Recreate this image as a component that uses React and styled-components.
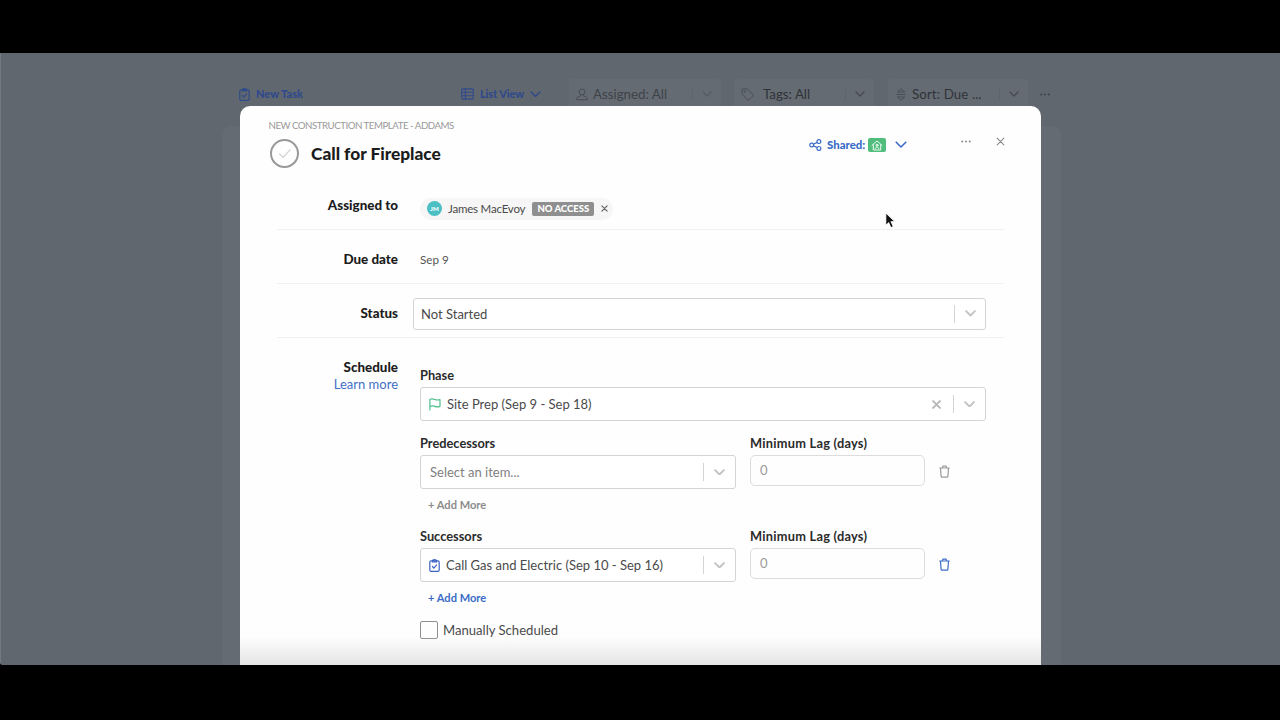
import React from "react";
import styled, { createGlobalStyle, css } from "styled-components";

const GlobalStyle = createGlobalStyle`
  * {
    box-sizing: border-box;
  }
  body {
    margin: 0;
    background: #000;
    font-family: Lato, "Open Sans", sans-serif;
    color: #4a4a4a;
    overflow: hidden;
  }
`;

const Chevron = ({ size = 10, weight = 1.6 }) => (
  <svg width={size} height={size * 0.6} viewBox="0 0 10 6" fill="none" stroke="currentColor" strokeWidth={weight} strokeLinecap="round" strokeLinejoin="round">
    <path d="M1 1l4 4 4-4" />
  </svg>
);

const Cross = ({ size = 8, weight = 1.2 }) => (
  <svg width={size} height={size} viewBox="0 0 8 8" fill="none" stroke="currentColor" strokeWidth={weight} strokeLinecap="round">
    <path d="M1 1l6 6M7 1L1 7" />
  </svg>
);

const Dots = () => (
  <svg width="10" height="3" viewBox="0 0 10 3" fill="currentColor">
    <circle cx="1.3" cy="1.5" r="1" />
    <circle cx="5" cy="1.5" r="1" />
    <circle cx="8.7" cy="1.5" r="1" />
  </svg>
);

const ClipboardCheck = () => (
  <svg width="11" height="13" viewBox="0 0 11 13" fill="none" stroke="currentColor" strokeWidth="1.2" strokeLinecap="round" strokeLinejoin="round">
    <rect x="0.8" y="1.9" width="9.4" height="10.4" rx="1.4" />
    <path d="M3.4 1.9V3h4.2V1.9C7.6 1.2 6.6.7 5.5.7S3.4 1.2 3.4 1.9z" fill="currentColor" fillOpacity="0.5" />
    <path d="M3.4 7.5l1.5 1.6 2.7-3.2" />
  </svg>
);

const ListIcon = () => (
  <svg width="13" height="12" viewBox="0 0 13 12" fill="none" stroke="currentColor" strokeWidth="1.1">
    <rect x="0.7" y="0.9" width="11.6" height="10.2" rx="1" />
    <path d="M0.7 4.3h11.6M0.7 7.7h11.6M4.4 0.9v10.2" />
  </svg>
);

const UserIcon = () => (
  <svg width="12" height="13" viewBox="0 0 12 13" fill="none" stroke="currentColor" strokeWidth="1">
    <circle cx="6" cy="3.9" r="2.9" />
    <path d="M4.6 6.6v1.2L1.6 9c-.6.3-.9.8-.9 1.4v1.3h10.6v-1.3c0-.6-.3-1.1-.9-1.4l-3-1.2V6.6" />
  </svg>
);

const TagIcon = () => (
  <svg width="13" height="13" viewBox="0 0 13 13" fill="none" stroke="currentColor" strokeWidth="1" strokeLinejoin="round">
    <path d="M1 1.8v3.9c0 .4.1.7.4 1l5 5c.5.5 1.2.5 1.7 0l3.6-3.6c.5-.5.5-1.2 0-1.7l-5-5c-.3-.3-.6-.4-1-.4H1.8c-.5 0-.8.3-.8.8z" />
    <circle cx="3.6" cy="3.6" r="0.7" />
  </svg>
);

const SortIcon = () => (
  <svg width="10" height="13" viewBox="0 0 10 13" fill="none" stroke="currentColor" strokeWidth="1" strokeLinejoin="round">
    <path d="M5 .8L8.7 4H1.3zM5 12.2L1.3 9h7.4z" />
    <path d="M.5 6.5h9" />
  </svg>
);

const ShareIcon = () => (
  <svg width="13" height="12" viewBox="0 0 13 12" fill="none" stroke="currentColor" strokeWidth="1.2">
    <circle cx="2.7" cy="6" r="1.9" />
    <circle cx="9.9" cy="2.6" r="1.9" />
    <circle cx="9.9" cy="9.4" r="1.9" />
    <path d="M4.4 5.2l3.8-1.8M4.4 6.8l3.8 1.8" />
  </svg>
);

const HouseIcon = () => (
  <svg width="12" height="11" viewBox="0 0 12 11" fill="none" stroke="currentColor" strokeWidth="0.9" strokeLinecap="round" strokeLinejoin="round">
    <path d="M1 5.3L6 1l5 4.3M2.3 4.8v5.2h7.4V4.8" />
    <circle cx="6" cy="5.2" r="1" />
    <path d="M4.3 8.8c0-1 .7-1.7 1.7-1.7s1.7.7 1.7 1.7" />
  </svg>
);

const FlagIcon = () => (
  <svg width="12" height="13" viewBox="0 0 12 13" fill="none" stroke="currentColor" strokeWidth="1.2" strokeLinecap="round" strokeLinejoin="round">
    <path d="M.9 12V1.3c1.8-.7 3.4-.4 4.9.2s3.3.7 5.2.1v6.8c-1.9.7-3.7.6-5.2 0S2.7 7.7.9 8.5" />
  </svg>
);

const TrashIcon = () => (
  <svg width="11" height="13" viewBox="0 0 11 13" fill="none" stroke="currentColor" strokeWidth="1.2" strokeLinecap="round" strokeLinejoin="round">
    <path d="M.7 3h9.6M3.3 2.8l.6-1.6h3.2l.6 1.6M1.5 3.2l.6 8c.1.7.4 1 1 1h4.8c.6 0 .9-.3 1-1l.6-8" />
  </svg>
);

const Filter = ({ icon, text, faded, width, track, gap }) => (
  <FilterBox $width={width} $faded={faded}>
    <FilterIcon $gap={gap}>{icon}</FilterIcon>
    <FilterText $track={track}>{text}</FilterText>
    <FilterArrow $faded={faded}>
      <Chevron size={10} weight={1.3} />
    </FilterArrow>
  </FilterBox>
);

const Select = ({ icon, text, placeholder, clearable, ...rest }) => (
  <SelectBox {...rest}>
    {icon}
    <SelectText $placeholder={placeholder}>{text}</SelectText>
    {clearable && (
      <Clear>
        <Cross size={9} weight={1.8} />
      </Clear>
    )}
    <Arrow>
      <Chevron size={11} weight={1.8} />
    </Arrow>
  </SelectBox>
);

const LinkRow = ({ label, active, children }) => (
  <Link $active={active}>
    <Column>
      <FieldLabel>{label}</FieldLabel>
      {children}
      <AddMore $active={active}>+ Add More</AddMore>
    </Column>
    <Lag>
      <FieldLabel $track={0.25}>Minimum Lag (days)</FieldLabel>
      <LagInput>0</LagInput>
    </Lag>
    <Trash $active={active}>
      <TrashIcon />
    </Trash>
  </Link>
);

const App = () => (
  <Screen>
    <GlobalStyle />
    <Window>
      <Toolbar>
        <ToolButton $width={222} $gap={6}>
          <ClipboardCheck />
          <ToolText>New Task</ToolText>
        </ToolButton>
        <ToolButton $width={108} $gap={6}>
          <ListIcon />
          <ToolText $track={-0.12}>List View</ToolText>
          <Chevron size={11} weight={1.3} />
        </ToolButton>
        <Filter icon={<UserIcon />} text="Assigned: All" width={152} faded gap={4} />
        <Filter icon={<TagIcon />} text="Tags: All" width={140} gap={9} />
        <Filter icon={<SortIcon />} text="Sort: Due ..." width={140} gap={4} track={0.1} />
        <More>
          <Dots />
        </More>
      </Toolbar>
      <Board />

      <Modal>
        <Header>
          <Heading>
            <Template>NEW CONSTRUCTION TEMPLATE - ADDAMS</Template>
            <TitleRow>
              <Complete>
                <svg width="14" height="11" viewBox="0 0 14 11" fill="none" stroke="#cfcfcf" strokeWidth="1.2" strokeLinecap="round" strokeLinejoin="round">
                  <path d="M1.5 5.8l3.5 3.5L12.3 1.7" />
                </svg>
              </Complete>
              <Title>Call for Fireplace</Title>
            </TitleRow>
          </Heading>
          <Shared>
            <ShareIcon />
            <SharedText>Shared:</SharedText>
            <Badge>
              <HouseIcon />
            </Badge>
            <Chevron size={12} weight={1.3} />
          </Shared>
          <MenuButton>
            <Dots />
          </MenuButton>
          <CloseButton>
            <Cross size={9} weight={1} />
          </CloseButton>
        </Header>

        <Row $height={52}>
          <Label>Assigned to</Label>
          <Person>
            <Avatar>JM</Avatar>
            <PersonName>James MacEvoy</PersonName>
            <Access>NO ACCESS</Access>
            <Cross size={7} weight={1.4} />
          </Person>
        </Row>
        <Row $height={54}>
          <Label $drop={5}>Due date</Label>
          <DueDate>Sep 9</DueDate>
        </Row>
        <Row $height={54}>
          <Label $drop={5}>Status</Label>
          <StatusSelect text="Not Started" />
        </Row>

        <ScheduleRow>
          <ScheduleLabel>
            <span>Schedule</span>
            <LearnMore>Learn more</LearnMore>
          </ScheduleLabel>
          <Schedule>
            <FieldLabel>Phase</FieldLabel>
            <Select
              icon={<Green><FlagIcon /></Green>}
              text="Site Prep (Sep 9 - Sep 18)"
              clearable
            />
            <LinkRow label="Predecessors">
              <Select text="Select an item..." placeholder />
            </LinkRow>
            <LinkRow label="Successors" active>
              <Select
                icon={<Blue><ClipboardCheck /></Blue>}
                text="Call Gas and Electric (Sep 10 - Sep 16)"
              />
            </LinkRow>
            <Manual>
              <Checkbox />
              <span>Manually Scheduled</span>
            </Manual>
          </Schedule>
        </ScheduleRow>
        <BottomFade />
      </Modal>

      <Cursor width="13" height="19" viewBox="0 0 12 18">
        <path d="M1.5 1.5v12.3l2.8-2.6 2 4.6 2.4-1-2-4.5h3.9z" fill="#111" stroke="#fff" strokeWidth="1" />
      </Cursor>
    </Window>
  </Screen>
);

const tracking = css`
  letter-spacing: ${p => p.$track || 0}px;
`;

const Screen = styled.div`
  height: 720px;
  width: 1280px;
  padding-top: 53px;
  background: #000;
`;

const Window = styled.div`
  position: relative;
  height: 612px;
  overflow: hidden;
  border-left: 1px solid #747a82;
  border-radius: 0 0 0 3px;
  background: #61676f;
`;

const Toolbar = styled.div`
  display: flex;
  align-items: center;
  height: 30px;
  margin: 26px 0 0 238px;
`;

const ToolButton = styled.div`
  display: flex;
  align-items: center;
  gap: ${p => p.$gap}px;
  width: ${p => p.$width}px;
  color: #2f4a8c;
`;

const ToolText = styled.span`
  padding-bottom: 2px;
  font-size: 11px;
  font-weight: 900;
  ${tracking}
`;

const FilterBox = styled.div`
  display: flex;
  align-items: center;
  height: 30px;
  width: ${p => p.$width}px;
  margin-right: ${p => (p.$faded ? 13 : 14)}px;
  padding: 0 9px 0 6px;
  border-radius: 3px;
  background: #656b72;
  color: ${p => (p.$faded ? "#3e4349" : "#2f3338")};
`;

const FilterIcon = styled.div`
  display: flex;
  justify-content: center;
  width: 14px;
  margin-right: ${p => p.$gap}px;
  color: #484e55;
`;

const FilterText = styled.div`
  flex: 1;
  font-size: 13.3px;
  white-space: nowrap;
  ${tracking}
`;

const FilterArrow = styled.div`
  display: flex;
  align-items: center;
  height: 14px;
  padding-left: 9px;
  border-left: 1px solid #5e646b;
  color: ${p => (p.$faded ? "#555b62" : "#454a51")};
`;

const More = styled.div`
  display: flex;
  margin-left: -2px;
  color: #3b4046;
`;

const Board = styled.div`
  height: 540px;
  width: 839px;
  margin: 17px 0 0 221px;
  border-radius: 8px 8px 0 0;
  background: #656b73;
`;

const Modal = styled.div`
  position: absolute;
  top: 53px;
  left: 239px;
  width: 801px;
  height: 559px;
  padding: 0 37px;
  border-radius: 10px 10px 0 0;
  background: #fefefe;
`;

const Header = styled.div`
  display: flex;
  height: 72px;
  margin: 0 -9px;
`;

const Heading = styled.div`
  flex: none;
  width: 541px;
  padding-top: 12px;
`;

const Template = styled.div`
  font-size: 9.7px;
  line-height: 14px;
  color: #999;
  white-space: nowrap;
  letter-spacing: -0.48px;
  padding-left: 0.5px;
`;

const TitleRow = styled.div`
  display: flex;
  align-items: center;
  gap: 12px;
  margin: 7px 0 0 2px;
`;

const Complete = styled.div`
  display: flex;
  align-items: center;
  justify-content: center;
  width: 29px;
  height: 29px;
  border: 2px solid #999;
  border-radius: 50%;
`;

const Title = styled.div`
  padding-bottom: 1px;
  font-size: 17.3px;
  font-weight: 900;
  color: #1c1c1c;
`;

const Shared = styled.div`
  display: flex;
  flex: none;
  align-items: center;
  height: 20px;
  width: 152px;
  margin-top: 29px;
  color: #3b6cc7;
`;

const SharedText = styled.span`
  margin: 0 3px 0 5px;
  padding-bottom: 2px;
  font-size: 11.4px;
  font-weight: 900;
`;

const Badge = styled.span`
  display: flex;
  align-items: center;
  justify-content: center;
  width: 18px;
  height: 14px;
  margin-right: 9px;
  border-radius: 2px;
  background: #50bd7d;
  color: #fff;
`;

const MenuButton = styled.div`
  flex: none;
  width: 35px;
  padding-top: 31px;
  line-height: 0;
  color: #8a8a8a;
`;

const CloseButton = styled.div`
  flex: none;
  padding-top: 31px;
  line-height: 0;
  color: #8a8a8a;
`;

const Row = styled.div`
  display: flex;
  align-items: center;
  height: ${p => p.$height}px;
  border-bottom: 1px solid #f1f1f1;
`;

const Label = styled.div`
  flex: none;
  width: 121px;
  margin-right: 22px;
  padding-top: ${p => p.$drop || 2}px;
  text-align: right;
  font-size: 13.4px;
  font-weight: 900;
  color: #1c1c1c;
`;

const Person = styled.div`
  display: flex;
  align-items: center;
  height: 22px;
  margin-top: 10px;
  padding: 0 5px 0 7px;
  border-radius: 11px;
  background: #f6f6f6;
  color: #666;
`;

const Avatar = styled.div`
  width: 15px;
  height: 15px;
  border-radius: 50%;
  background: #4cbfc4;
  color: #fff;
  font-size: 6px;
  font-weight: 900;
  line-height: 15px;
  text-align: center;
`;

const PersonName = styled.span`
  margin: 0 7px 0 6px;
  font-size: 11.5px;
  letter-spacing: -0.2px;
  color: #4a4a4a;
`;

const Access = styled.span`
  width: 62px;
  height: 14px;
  margin-right: 7px;
  border-radius: 2px;
  background: #8f8f8f;
  color: #fff;
  font-size: 9.5px;
  font-weight: 900;
  line-height: 14px;
  text-align: center;
`;

const DueDate = styled.div`
  padding-top: 5px;
  font-size: 11.7px;
  color: #555;
`;

const SelectBox = styled.div`
  display: flex;
  align-items: center;
  height: 34px;
  padding: 0 10px 0 9px;
  border: 1px solid #d4d4d4;
  border-radius: 3px;
  background: #fff;
`;

const StatusSelect = styled(Select)`
  flex: 1;
  height: 32px;
  margin: 6px 18px 0 -7px;
  padding: 0 9px 0 7px;
`;

const SelectText = styled.div`
  flex: 1;
  font-size: 13px;
  color: ${p => (p.$placeholder ? "#808080" : "#4a4a4a")};
  white-space: nowrap;
`;

const Clear = styled.div`
  display: flex;
  margin-right: 12px;
  color: #b8b8b8;
`;

const Arrow = styled.div`
  display: flex;
  align-items: center;
  height: 18px;
  padding-left: 10px;
  border-left: 1px solid #d4d4d4;
  color: #c4c4c4;
`;

const ScheduleRow = styled.div`
  display: flex;
`;

const ScheduleLabel = styled(Label)`
  display: flex;
  flex-direction: column;
  padding-top: 21px;
  line-height: 17px;
`;

const LearnMore = styled.a`
  font-size: 13px;
  font-weight: 400;
  color: #3f6ec5;
`;

const Schedule = styled.div`
  width: 566px;
  padding-top: 27px;
`;

const FieldLabel = styled.div`
  height: 22px;
  font-size: 12.8px;
  font-weight: 700;
  line-height: 20px;
  color: #2b2b2b;
  white-space: nowrap;
  ${tracking}
`;

const Link = styled.div`
  display: flex;
  margin-top: ${p => (p.$active ? 13 : 12)}px;
`;

const Column = styled.div`
  width: 316px;
`;

const AddMore = styled.div`
  height: 16px;
  margin: 8px 0 0 8px;
  font-size: 11.1px;
  font-weight: 700;
  line-height: 16px;
  color: ${p => (p.$active ? "#3b6cc7" : "#8c8c8c")};
`;

const Lag = styled.div`
  width: 175px;
  margin-left: 14px;
`;

const LagInput = styled.div`
  height: 31px;
  padding-left: 9px;
  border: 1px solid #dcdcdc;
  border-radius: 5px;
  font-size: 13px;
  line-height: 29px;
  color: #999;
`;

const Trash = styled.div`
  margin: 32px 0 0 14px;
  line-height: 0;
  color: ${p => (p.$active ? "#3b6cc7" : "#9a9a9a")};
`;

const Manual = styled.div`
  display: flex;
  align-items: center;
  gap: 5px;
  height: 18px;
  margin-top: 15px;
  font-size: 13.1px;
`;

const Checkbox = styled.div`
  width: 18px;
  height: 18px;
  border: 1px solid #8f8f8f;
  border-radius: 2px;
`;

const Green = styled.span`
  display: flex;
  margin: 0 6px 0 -1px;
  color: #4fc08d;
`;

const Blue = styled.span`
  display: flex;
  margin: 0 6px 0 -1px;
  color: #3b63c4;
`;

const BottomFade = styled.div`
  position: absolute;
  left: 0;
  right: 0;
  bottom: 0;
  height: 28px;
  background: linear-gradient(rgba(230, 230, 230, 0), #e4e4e4);
`;

const Cursor = styled.svg`
  position: absolute;
  left: 883px;
  top: 158px;
`;

export default App;
